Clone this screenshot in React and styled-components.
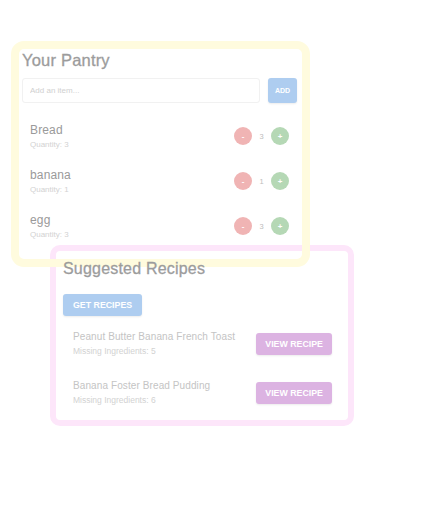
import React from "react";
import styled, { createGlobalStyle } from "styled-components";

const GlobalStyle = createGlobalStyle`
    body {
        margin:0;
        background:#fff;
        font-family:"Liberation Sans", Arial, sans-serif;
    }
`;

const Page = styled.div`
    width:437px;
    height:520px;
    padding:41px 0 0 11px;
    box-sizing:border-box;
`;

const PantryCard = styled.div`
    width:299px;
    height:226px;
    box-sizing:border-box;
    border:8px solid #fffbde;
    border-radius:13px;
    padding:2px 5px 0 3px;
    position:relative;
    z-index:1;
`;

const Title = styled.h2`
    margin:0;
    font-size:${p => p.$size || "16.5px"};
    font-weight:normal;
    color:#9c9c9c;
    -webkit-text-stroke:0.3px #9c9c9c;
    letter-spacing:0.2px;
    line-height:18px;
    position:relative;
    z-index:2;
`;

const AddRow = styled.div`
    display:flex;
    align-items:center;
    gap:8px;
    margin-top:9px;
`;

const ItemInput = styled.input`
    width:238px;
    height:25px;
    box-sizing:border-box;
    border:1px solid #f1f1f1;
    border-radius:3px;
    padding:0 7px;
    font-family:inherit;
    font-size:8px;
    outline:none;
    &::placeholder { color:#d0d0d0; }
`;

const Button = styled.button`
    border:none;
    border-radius:3px;
    background:${p => p.$bg};
    color:#fff;
    font-family:inherit;
    font-weight:bold;
    font-size:${p => p.$size || "8.8px"};
    height:${p => p.$h || "22px"};
    width:${p => p.$w || "auto"};
    padding:0 ${p => p.$px || "9px"};
    box-shadow:0 1px 2px rgba(0,0,0,0.08);
    cursor:pointer;
`;

const ItemList = styled.div`
    display:flex;
    flex-direction:column;
    padding:20px 8px 0 8px;
    gap:19px;
`;

const Item = styled.div`
    display:flex;
    align-items:center;
    justify-content:space-between;
`;

const ItemName = styled.div`
    font-size:12px;
    color:#9a9a9a;
    letter-spacing:0.15px;
    line-height:14px;
`;

const SubText = styled.div`
    font-size:${p => p.$size || "8px"};
    color:#d2d2d2;
    margin-top:${p => p.$mt || "3px"};
`;

const Counter = styled.div`
    display:flex;
    align-items:center;
    gap:5px;
`;

const Circle = styled.div`
    width:18px;
    height:18px;
    border-radius:50%;
    background:${p => p.$bg};
    color:#fff;
    font-size:8px;
    font-weight:bold;
    display:flex;
    align-items:center;
    justify-content:center;
`;

const Count = styled.span`
    font-size:7.5px;
    color:#bdbdbd;
    width:9px;
    text-align:center;
`;

const RecipesCard = styled.div`
    width:304px;
    height:181px;
    box-sizing:border-box;
    margin:-22px 0 0 39px;
    border:6px solid #fde6fa;
    border-radius:10px;
    padding:9px 16px 0 7px;
    position:relative;
`;

const GetRow = styled.div`
    margin-top:16px;
`;

const RecipeList = styled.div`
    display:flex;
    flex-direction:column;
    gap:24px;
    margin-top:15px;
    padding-left:10px;
`;

const Recipe = styled.div`
    display:flex;
    align-items:center;
    justify-content:space-between;
`;

const RecipeName = styled.div`
    font-size:10px;
    color:#c4c4c4;
    letter-spacing:0.1px;
`;

const pantry = [
    { name: "Bread", qty: 3 },
    { name: "banana", qty: 1 },
    { name: "egg", qty: 3 },
];

const recipes = [
    { name: "Peanut Butter Banana French Toast", missing: 5 },
    { name: "Banana Foster Bread Pudding", missing: 6 },
];

export default function App() {
    return (
        <Page>
            <GlobalStyle />
            <PantryCard>
                <Title>Your Pantry</Title>
                <AddRow>
                    <ItemInput placeholder="Add an item..." />
                    <Button $bg="#aecdf0" $size="7px" $h="25px" $w="29px" $px="0">ADD</Button>
                </AddRow>
                <ItemList>
                    {pantry.map(item => (
                        <Item key={item.name}>
                            <div>
                                <ItemName>{item.name}</ItemName>
                                <SubText>Quantity: {item.qty}</SubText>
                            </div>
                            <Counter>
                                <Circle $bg="#f0b4b4">-</Circle>
                                <Count>{item.qty}</Count>
                                <Circle $bg="#b5d8b5">+</Circle>
                            </Counter>
                        </Item>
                    ))}
                </ItemList>
            </PantryCard>
            <RecipesCard>
                <Title as="h3" $size="16px">Suggested Recipes</Title>
                <GetRow>
                    <Button $bg="#aecdf0" $px="10px">GET RECIPES</Button>
                </GetRow>
                <RecipeList>
                    {recipes.map(r => (
                        <Recipe key={r.name}>
                            <div>
                                <RecipeName>{r.name}</RecipeName>
                                <SubText $size="8.5px" $mt="4px">Missing Ingredients: {r.missing}</SubText>
                            </div>
                            <Button $bg="#dcb3e2">VIEW RECIPE</Button>
                        </Recipe>
                    ))}
                </RecipeList>
            </RecipesCard>
        </Page>
    );
}
